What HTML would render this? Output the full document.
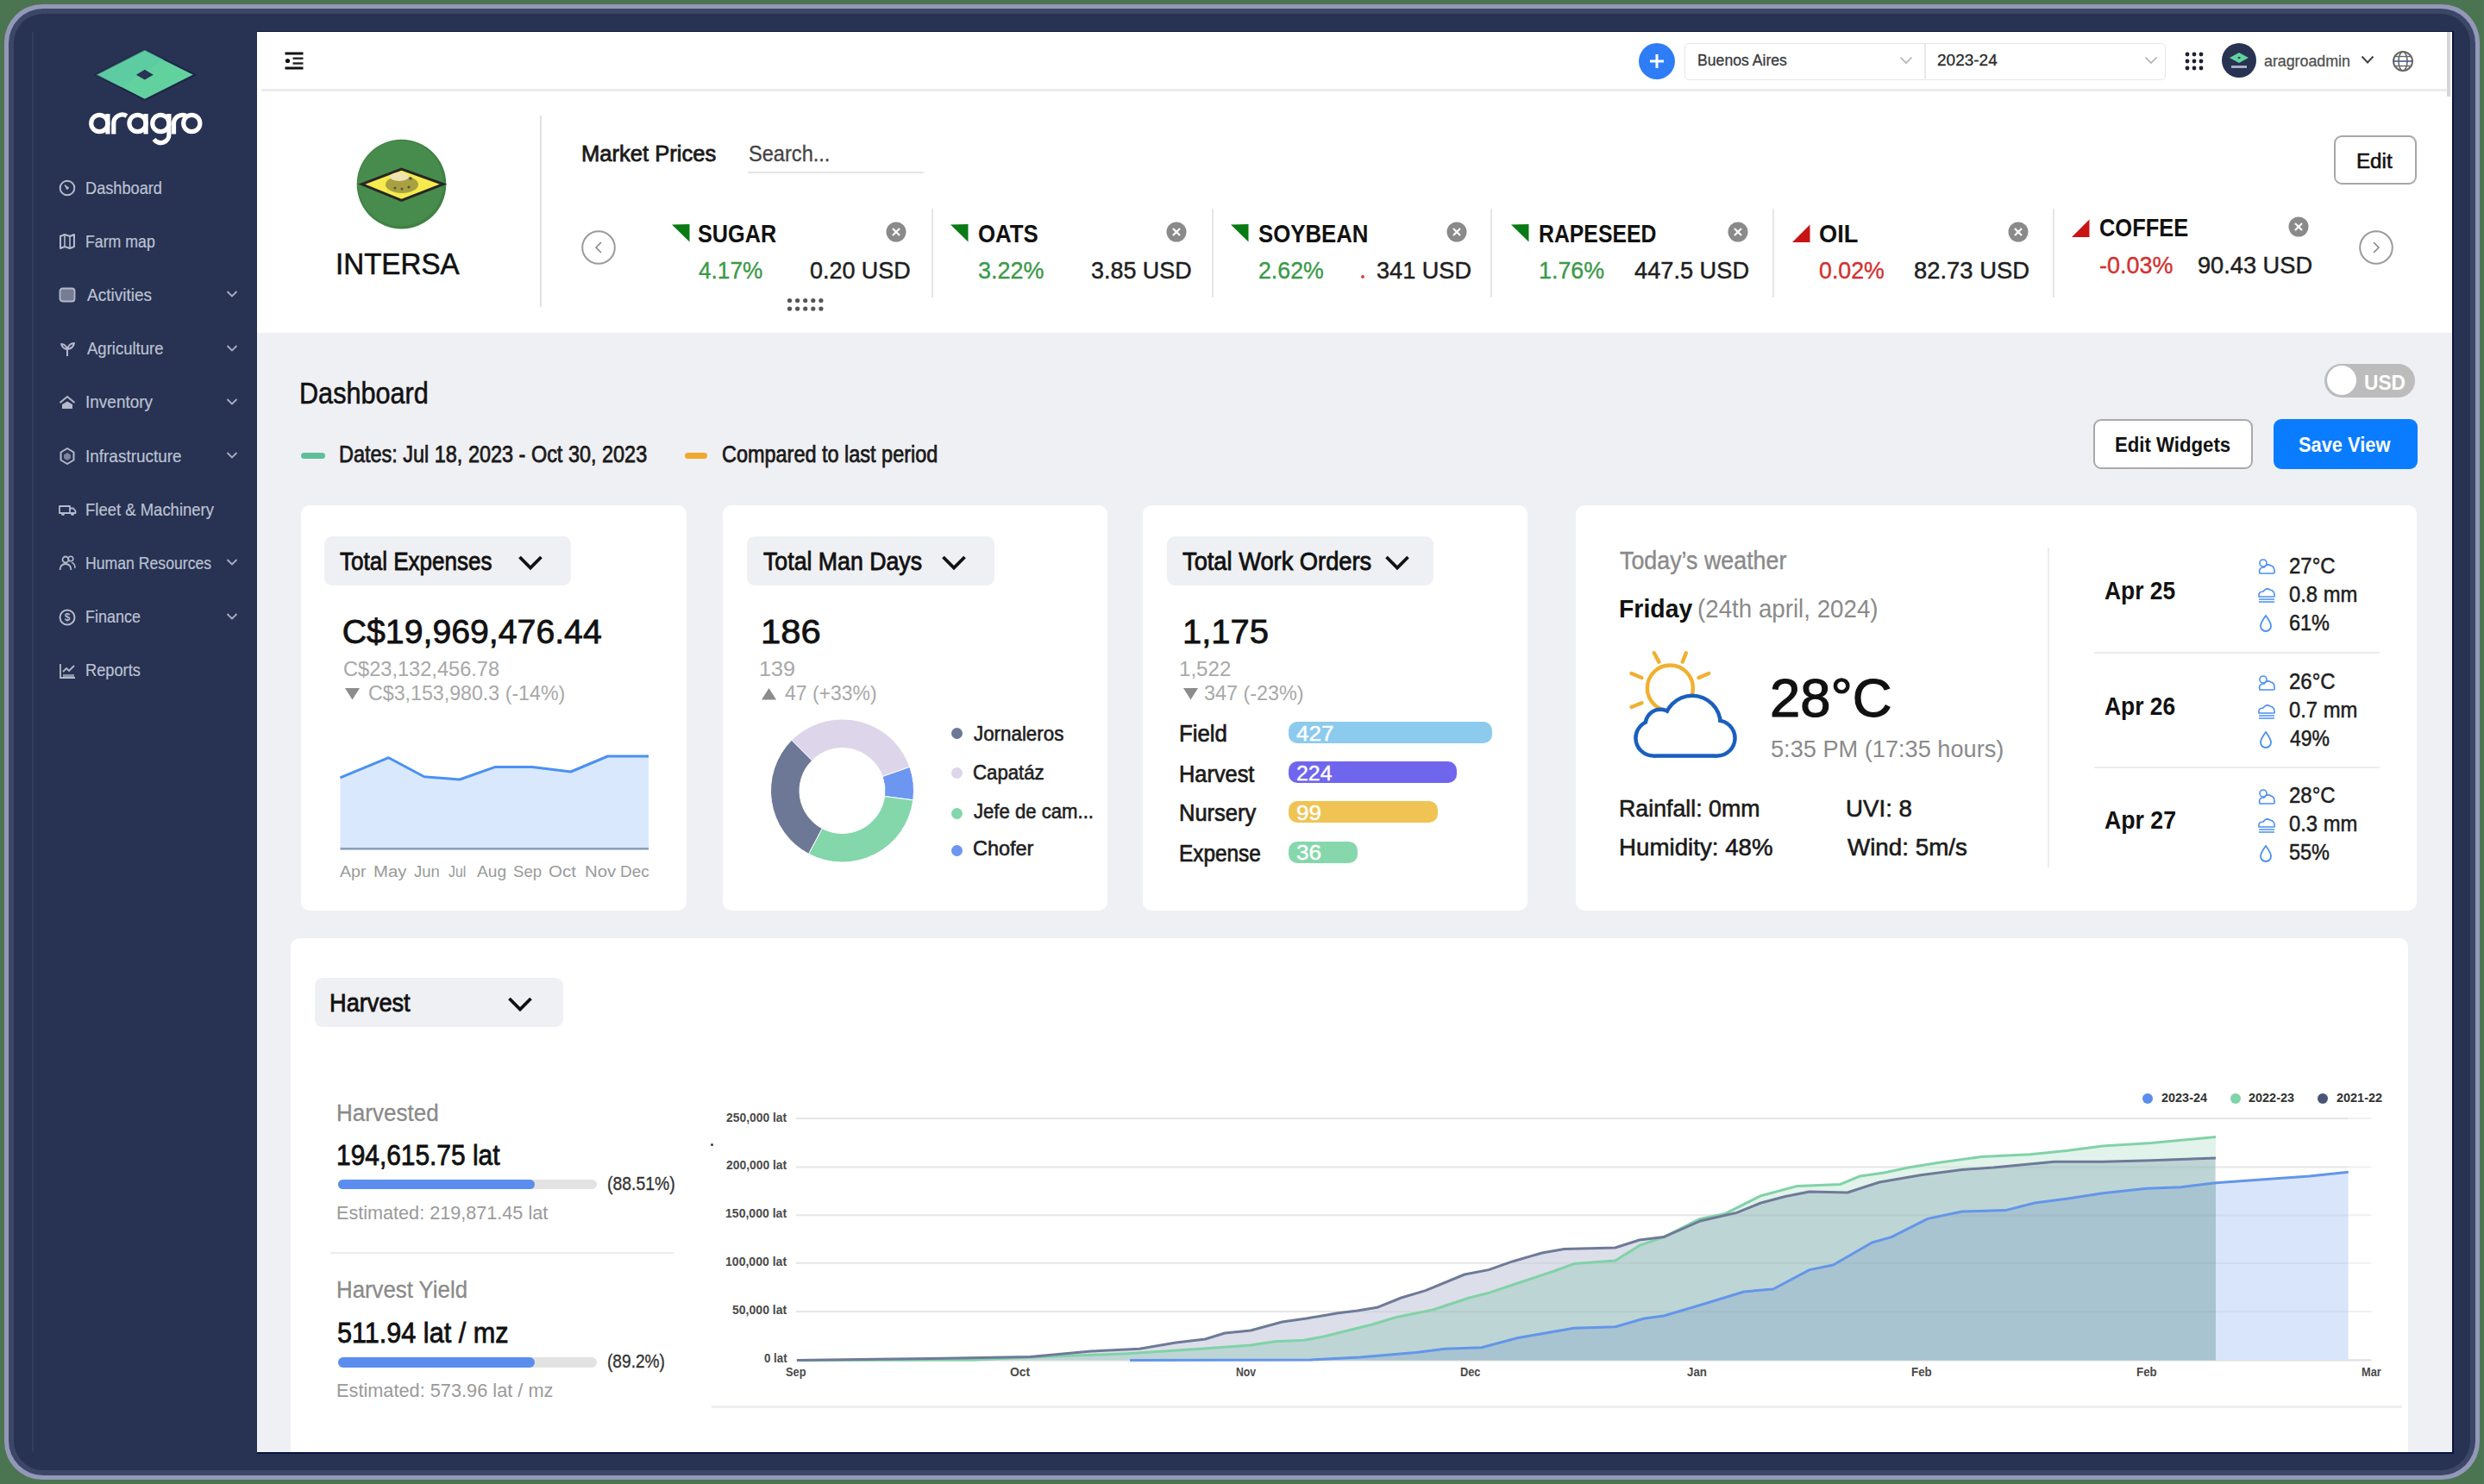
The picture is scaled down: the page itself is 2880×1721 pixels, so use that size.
<!DOCTYPE html>
<html><head><meta charset="utf-8"><style>
html,body{margin:0;padding:0;}
body{width:2880px;height:1721px;position:relative;overflow:hidden;background:#4a7550;font-family:"Liberation Sans", sans-serif;}
</style></head><body>
<div style="position:absolute;left:5.0px;top:5.0px;width:2870.0px;height:1711.0px;background:#9398b8;border-radius:44px;"></div>
<div style="position:absolute;left:10.0px;top:10.0px;width:2860.0px;height:1701.0px;background:#3c4667;border-radius:40px;"></div>
<div style="position:absolute;left:16.0px;top:16.0px;width:2848.0px;height:1689.0px;background:#283253;border-radius:34px;"></div>
<div style="position:absolute;left:37.0px;top:37.0px;width:2.0px;height:1647.0px;background:#323c5e;border-radius:0px;"></div>
<div style="position:absolute;left:37.0px;top:1682.5px;width:261.0px;height:1.5px;background:#2f395b;border-radius:0px;"></div>
<div style="position:absolute;left:39.0px;top:37.0px;width:259.0px;height:1647.0px;background:#283253;border-radius:0px;"></div>
<div style="position:absolute;left:298.0px;top:37.0px;width:2545.0px;height:349.0px;background:#ffffff;border-radius:0px;"></div>
<div style="position:absolute;left:298.0px;top:386.0px;width:2545.0px;height:1298.0px;background:#eff0f4;border-radius:0px;"></div>
<div style="position:absolute;left:303.0px;top:103.0px;width:2535.0px;height:3.0px;background:#ececef;border-radius:0px;"></div>
<div style="position:absolute;left:298.0px;top:35.5px;width:2547.0px;height:1.5px;background:#0a1440;border-radius:0px;"></div>
<div style="position:absolute;left:2843.0px;top:37.0px;width:1.5px;height:1647.0px;background:#0a1440;border-radius:0px;"></div>
<div style="position:absolute;left:298.0px;top:1684.0px;width:2547.0px;height:1.5px;background:#0a1440;border-radius:0px;"></div>
<div style="position:absolute;left:2837.0px;top:37.0px;width:4.0px;height:75.0px;background:#d6d6d6;border-radius:0px;"></div>
<svg style="position:absolute;left:0;top:0" width="300" height="200" viewBox="0 0 300 200">
<polygon points="111,86.7 167.8,57.5 226,86.7 167.8,115.8" fill="#61d29e" stroke="#1c2546" stroke-width="2"/>
<polygon points="111,86.7 167.8,57.5 190,69 140,101" fill="#5bc6a6" opacity="0.5"/>
<polygon points="157.8,86.7 167.8,80.8 177.8,86.7 167.8,92.6" fill="#283253"/>
<g fill="none" stroke="#ffffff" stroke-width="5.2" stroke-linecap="butt">
<circle cx="115.3" cy="143" r="9.6"/><line x1="124.9" y1="132" x2="124.9" y2="155.5"/>
<path d="M131.8 155.5 V143 A10 10 0 0 1 147 134.5"/>
<circle cx="159.5" cy="143" r="9.6"/><line x1="169.1" y1="132" x2="169.1" y2="155.5"/>
<circle cx="186.3" cy="143" r="9.6"/><path d="M195.9 132 V155 A9.6 9.6 0 0 1 178.5 161.5"/>
<path d="M201.5 155.5 V143 A10 10 0 0 1 216 134.5"/>
<circle cx="222.3" cy="143" r="9.6"/>
</g></svg>
<div style="position:absolute;left:98.9px;top:207.5px;font-size:20.64px;font-weight:normal;color:#bcc2d2;white-space:nowrap;line-height:1;transform:scaleX(0.8816);transform-origin:0 0;-webkit-text-stroke:0.2px #bcc2d2;">Dashboard</div>
<svg style="position:absolute;left:66.4px;top:206.0px" width="24" height="24"><circle cx="12" cy="12" r="8.3" fill="none" stroke="#b4bacb" stroke-width="2"/><path d="M12 12 L9 8.5" stroke="#b4bacb" stroke-width="1.8"/><circle cx="12" cy="12" r="1.8" fill="#b4bacb"/></svg>
<div style="position:absolute;left:99.0px;top:269.7px;font-size:20.64px;font-weight:normal;color:#bcc2d2;white-space:nowrap;line-height:1;transform:scaleX(0.8604);transform-origin:0 0;-webkit-text-stroke:0.2px #bcc2d2;">Farm map</div>
<svg style="position:absolute;left:66.4px;top:268.2px" width="24" height="24"><path d="M4 6 L9 4 L15 6 L20 4 V18 L15 20 L9 18 L4 20 Z" fill="none" stroke="#b4bacb" stroke-width="2" stroke-linejoin="round"/><path d="M9 4 V18 M15 6 V20" stroke="#b4bacb" stroke-width="1.6"/></svg>
<div style="position:absolute;left:100.7px;top:331.9px;font-size:20.64px;font-weight:normal;color:#bcc2d2;white-space:nowrap;line-height:1;transform:scaleX(0.9235);transform-origin:0 0;-webkit-text-stroke:0.2px #bcc2d2;">Activities</div>
<svg style="position:absolute;left:66.4px;top:330.4px" width="24" height="24"><rect x="3.5" y="4.5" width="17" height="15" rx="3" fill="#b4bacb" opacity="0.55"/><rect x="3.5" y="4.5" width="17" height="15" rx="3" fill="none" stroke="#b4bacb" stroke-width="1.8"/></svg>
<svg style="position:absolute;left:262px;top:336.4px" width="14" height="10"><path d="M1.5 2 L7 7.5 L12.5 2" fill="none" stroke="#aab0c4" stroke-width="1.8"/></svg>
<div style="position:absolute;left:100.7px;top:394.1px;font-size:20.64px;font-weight:normal;color:#bcc2d2;white-space:nowrap;line-height:1;transform:scaleX(0.8980);transform-origin:0 0;-webkit-text-stroke:0.2px #bcc2d2;">Agriculture</div>
<svg style="position:absolute;left:66.4px;top:392.6px" width="24" height="24"><path d="M12 20 V12 M12 12 Q7 12 5 6 Q10 6 12 12 M12 12 Q14 5 20 5 Q19 11 12 12" fill="none" stroke="#b4bacb" stroke-width="2" stroke-linejoin="round"/></svg>
<svg style="position:absolute;left:262px;top:398.6px" width="14" height="10"><path d="M1.5 2 L7 7.5 L12.5 2" fill="none" stroke="#aab0c4" stroke-width="1.8"/></svg>
<div style="position:absolute;left:98.9px;top:456.3px;font-size:20.64px;font-weight:normal;color:#bcc2d2;white-space:nowrap;line-height:1;transform:scaleX(0.9205);transform-origin:0 0;-webkit-text-stroke:0.2px #bcc2d2;">Inventory</div>
<svg style="position:absolute;left:66.4px;top:454.8px" width="24" height="24"><path d="M3.5 12 L12 5 L20.5 12" fill="none" stroke="#b4bacb" stroke-width="2"/><path d="M6 19 V14 L12 10.5 L18 14 V19 Z" fill="#b4bacb"/></svg>
<svg style="position:absolute;left:262px;top:460.8px" width="14" height="10"><path d="M1.5 2 L7 7.5 L12.5 2" fill="none" stroke="#aab0c4" stroke-width="1.8"/></svg>
<div style="position:absolute;left:98.9px;top:518.5px;font-size:20.64px;font-weight:normal;color:#bcc2d2;white-space:nowrap;line-height:1;transform:scaleX(0.9185);transform-origin:0 0;-webkit-text-stroke:0.2px #bcc2d2;">Infrastructure</div>
<svg style="position:absolute;left:66.4px;top:517.0px" width="24" height="24"><path d="M12 3 L19.5 7.5 V16.5 L12 21 L4.5 16.5 V7.5 Z" fill="none" stroke="#b4bacb" stroke-width="2" stroke-linejoin="round"/><path d="M12 8 L16 10.5 V14.5 L12 17 L8 14.5 V10.5 Z" fill="#b4bacb" opacity="0.6"/></svg>
<svg style="position:absolute;left:262px;top:523.0px" width="14" height="10"><path d="M1.5 2 L7 7.5 L12.5 2" fill="none" stroke="#aab0c4" stroke-width="1.8"/></svg>
<div style="position:absolute;left:98.9px;top:580.7px;font-size:20.64px;font-weight:normal;color:#bcc2d2;white-space:nowrap;line-height:1;transform:scaleX(0.8963);transform-origin:0 0;-webkit-text-stroke:0.2px #bcc2d2;">Fleet &amp; Machinery</div>
<svg style="position:absolute;left:66.4px;top:579.2px" width="24" height="24"><path d="M3 8 H15 V16 H3 Z M15 10.5 H19 L21.5 13.5 V16 H15" fill="none" stroke="#b4bacb" stroke-width="1.8" stroke-linejoin="round"/><circle cx="7" cy="17" r="2" fill="#b4bacb"/><circle cx="18" cy="17" r="2" fill="#b4bacb"/></svg>
<div style="position:absolute;left:99.0px;top:642.9px;font-size:20.64px;font-weight:normal;color:#bcc2d2;white-space:nowrap;line-height:1;transform:scaleX(0.8554);transform-origin:0 0;-webkit-text-stroke:0.2px #bcc2d2;">Human Resources</div>
<svg style="position:absolute;left:66.4px;top:641.4px" width="24" height="24"><circle cx="10" cy="8" r="3.5" fill="none" stroke="#b4bacb" stroke-width="1.8"/><path d="M3.5 20 Q4 13 10 13 Q16 13 16.5 20" fill="none" stroke="#b4bacb" stroke-width="1.8"/><circle cx="16" cy="7" r="2.8" fill="none" stroke="#b4bacb" stroke-width="1.5"/><path d="M17 11.5 Q21 12 21 18" fill="none" stroke="#b4bacb" stroke-width="1.5"/></svg>
<svg style="position:absolute;left:262px;top:647.4px" width="14" height="10"><path d="M1.5 2 L7 7.5 L12.5 2" fill="none" stroke="#aab0c4" stroke-width="1.8"/></svg>
<div style="position:absolute;left:99.0px;top:705.1px;font-size:20.64px;font-weight:normal;color:#bcc2d2;white-space:nowrap;line-height:1;transform:scaleX(0.8718);transform-origin:0 0;-webkit-text-stroke:0.2px #bcc2d2;">Finance</div>
<svg style="position:absolute;left:66.4px;top:703.6px" width="24" height="24"><circle cx="12" cy="12" r="8.5" fill="none" stroke="#b4bacb" stroke-width="2"/><text x="12" y="16.3" font-size="12" font-family="Liberation Sans" font-weight="bold" text-anchor="middle" fill="#b4bacb">$</text></svg>
<svg style="position:absolute;left:262px;top:709.6px" width="14" height="10"><path d="M1.5 2 L7 7.5 L12.5 2" fill="none" stroke="#aab0c4" stroke-width="1.8"/></svg>
<div style="position:absolute;left:98.9px;top:767.3px;font-size:20.64px;font-weight:normal;color:#bcc2d2;white-space:nowrap;line-height:1;transform:scaleX(0.8843);transform-origin:0 0;-webkit-text-stroke:0.2px #bcc2d2;">Reports</div>
<svg style="position:absolute;left:66.4px;top:765.8px" width="24" height="24"><path d="M4 4 V20 H21" fill="none" stroke="#b4bacb" stroke-width="1.8"/><path d="M7 13 L11 9 L14 12 L20 6" fill="none" stroke="#b4bacb" stroke-width="1.8"/><rect x="7" y="16" width="13" height="3" fill="#b4bacb" opacity="0.7"/></svg>
<svg style="position:absolute;left:325px;top:55px" width="32" height="30">
<rect x="5.5" y="5.5" width="21" height="3" fill="#111"/>
<rect x="14.5" y="11.5" width="12" height="2.4" fill="#222"/>
<rect x="14.5" y="17.3" width="12" height="2.4" fill="#222"/>
<circle cx="8.5" cy="15.5" r="2.6" fill="#111"/>
<rect x="5.5" y="22.5" width="21" height="3" fill="#111"/>
</svg>
<div style="position:absolute;left:1900px;top:49.6px;width:42px;height:42px;border-radius:50%;background:#2f7df6"></div>
<svg style="position:absolute;left:1900px;top:49.6px" width="42" height="42"><path d="M21 13 V29 M13 21 H29" stroke="#fff" stroke-width="3"/></svg>
<div style="position:absolute;left:1953px;top:49.5px;width:556px;height:41px;border:1.5px solid #e6e6e6;border-radius:5px;background:#fff"></div>
<div style="position:absolute;left:2231.0px;top:51.0px;width:2.0px;height:40.0px;background:#e8e8e8;border-radius:0px;"></div>
<div style="position:absolute;left:1967.7px;top:61.2px;font-size:18.90px;font-weight:normal;color:#3a3a3a;white-space:nowrap;line-height:1;transform:scaleX(0.9336);transform-origin:0 0;-webkit-text-stroke:0.3px #3a3a3a;">Buenos Aires</div>
<div style="position:absolute;left:2246.4px;top:61.2px;font-size:18.90px;font-weight:normal;color:#2a2a2a;white-space:nowrap;line-height:1;transform:scaleX(1.0059);transform-origin:0 0;-webkit-text-stroke:0.3px #2a2a2a;">2023-24</div>
<svg style="position:absolute;left:2202px;top:64px" width="16" height="12"><path d="M1.5 2.5 L8 9 L14.5 2.5" fill="none" stroke="#b0b0b0" stroke-width="1.6"/></svg>
<svg style="position:absolute;left:2486px;top:64px" width="16" height="12"><path d="M1.5 2.5 L8 9 L14.5 2.5" fill="none" stroke="#b0b0b0" stroke-width="1.6"/></svg>
<svg style="position:absolute;left:2533px;top:60px" width="24" height="24"><circle cx="3" cy="3" r="2.4" fill="#1d2033"/><circle cx="3" cy="11" r="2.4" fill="#1d2033"/><circle cx="3" cy="19" r="2.4" fill="#1d2033"/><circle cx="11" cy="3" r="2.4" fill="#1d2033"/><circle cx="11" cy="11" r="2.4" fill="#1d2033"/><circle cx="11" cy="19" r="2.4" fill="#1d2033"/><circle cx="19" cy="3" r="2.4" fill="#1d2033"/><circle cx="19" cy="11" r="2.4" fill="#1d2033"/><circle cx="19" cy="19" r="2.4" fill="#1d2033"/></svg>
<svg style="position:absolute;left:2576px;top:50px" width="40" height="40">
<circle cx="20" cy="20" r="20" fill="#283253"/>
<polygon points="9,17 20,11 31,17 20,23" fill="#61d29e"/>
<polygon points="18,17 20,15.8 22,17 20,18.2" fill="#283253"/>
<rect x="11" y="26" width="18" height="3" fill="#c9cde0" opacity="0.8"/>
</svg>
<div style="position:absolute;left:2625.0px;top:62.1px;font-size:18.17px;font-weight:normal;color:#505050;white-space:nowrap;line-height:1;transform:scaleX(0.9800);transform-origin:0 0;-webkit-text-stroke:0.3px #505050;">aragroadmin</div>
<svg style="position:absolute;left:2737px;top:63px" width="16" height="12"><path d="M1.5 2.5 L8 9.5 L14.5 2.5" fill="none" stroke="#444" stroke-width="2"/></svg>
<svg style="position:absolute;left:2772px;top:57px" width="28" height="28">
<circle cx="14" cy="14" r="11" fill="none" stroke="#666" stroke-width="2"/>
<ellipse cx="14" cy="14" rx="5" ry="11" fill="none" stroke="#666" stroke-width="1.6"/>
<line x1="3" y1="14" x2="25" y2="14" stroke="#4a5a90" stroke-width="1.6"/>
<line x1="5" y1="8.5" x2="23" y2="8.5" stroke="#666" stroke-width="1.4"/>
<line x1="5" y1="19.5" x2="23" y2="19.5" stroke="#666" stroke-width="1.4"/>
</svg>
<svg style="position:absolute;left:410px;top:160px" width="110" height="110" viewBox="0 0 110 110">
<circle cx="55.5" cy="53.6" r="51.8" fill="#3f8244"/>
<circle cx="54.5" cy="52.6" r="49.5" fill="#488c4d"/>
<polygon points="9.4,53.6 55.5,36 104,53.6 55.5,72.4" fill="#f6ea4e" stroke="#262626" stroke-width="3"/>
<ellipse cx="56" cy="54" rx="19" ry="10" fill="#a9a040"/>
<ellipse cx="53" cy="45" rx="11" ry="5" fill="#efe2b4"/>
<circle cx="48" cy="58" r="1.6" fill="#555"/><circle cx="56" cy="59" r="1.6" fill="#555"/><circle cx="64" cy="57" r="1.6" fill="#555"/><circle cx="66" cy="47" r="1.8" fill="#555"/>
</svg>
<div style="position:absolute;left:388.8px;top:289.3px;font-size:35.61px;font-weight:normal;color:#111;white-space:nowrap;line-height:1;transform:scaleX(0.9303);transform-origin:0 0;-webkit-text-stroke:0.6px #111;">INTERSA</div>
<div style="position:absolute;left:626.0px;top:134.0px;width:2.0px;height:222.0px;background:#e2e2e2;border-radius:0px;"></div>
<div style="position:absolute;left:673.5px;top:164.8px;font-size:26.16px;font-weight:normal;color:#1a1a1a;white-space:nowrap;line-height:1;transform:scaleX(0.9777);transform-origin:0 0;-webkit-text-stroke:0.8px #1a1a1a;">Market Prices</div>
<div style="position:absolute;left:868.1px;top:164.8px;font-size:26.16px;font-weight:normal;color:#444;white-space:nowrap;line-height:1;transform:scaleX(0.9020);transform-origin:0 0;-webkit-text-stroke:0.3px #444;">Search...</div>
<div style="position:absolute;left:867.0px;top:199.0px;width:204.0px;height:2.0px;background:#e4e4e4;border-radius:0px;"></div>
<svg style="position:absolute;left:674.0px;top:266.5px" width="40" height="40"><circle cx="20" cy="20" r="18.8" fill="none" stroke="#9a9a9a" stroke-width="2"/><path d="M23 14 L17 20 L23 26" fill="none" stroke="#888" stroke-width="1.6"/></svg>
<svg style="position:absolute;left:2734.6px;top:266.5px" width="40" height="40"><circle cx="20" cy="20" r="18.8" fill="none" stroke="#9a9a9a" stroke-width="2"/><path d="M17 14 L23 20 L17 26" fill="none" stroke="#888" stroke-width="1.6"/></svg>
<div style="position:absolute;left:1080.0px;top:242.0px;width:2.0px;height:103.0px;background:#e6e6e6;border-radius:0px;"></div>
<div style="position:absolute;left:1405.0px;top:242.0px;width:2.0px;height:103.0px;background:#e6e6e6;border-radius:0px;"></div>
<div style="position:absolute;left:1728.0px;top:242.0px;width:2.0px;height:103.0px;background:#e6e6e6;border-radius:0px;"></div>
<div style="position:absolute;left:2055.0px;top:242.0px;width:2.0px;height:103.0px;background:#e6e6e6;border-radius:0px;"></div>
<div style="position:absolute;left:2380.0px;top:242.0px;width:2.0px;height:103.0px;background:#e6e6e6;border-radius:0px;"></div>
<svg style="position:absolute;left:777.6px;top:259.0px" width="24" height="24"><polygon points="1,1.5 21.5,1 21.5,21.5" fill="#0a7a14"/></svg>
<div style="position:absolute;left:808.7px;top:256.9px;font-size:29.07px;font-weight:bold;color:#111;white-space:nowrap;line-height:1;transform:scaleX(0.8680);transform-origin:0 0;">SUGAR</div>
<div style="position:absolute;left:809.6px;top:300.2px;font-size:27.62px;font-weight:normal;color:#3a9a48;white-space:nowrap;line-height:1;transform:scaleX(0.9487);transform-origin:0 0;-webkit-text-stroke:0.35px #3a9a48;">4.17%</div>
<div style="position:absolute;left:939.0px;top:300.2px;font-size:27.62px;font-weight:normal;color:#1e1e1e;white-space:nowrap;line-height:1;transform:scaleX(0.9746);transform-origin:0 0;-webkit-text-stroke:0.45px #1e1e1e;">0.20 USD</div>
<svg style="position:absolute;left:1026.5px;top:257.4px" width="24" height="24"><circle cx="12" cy="12" r="11.5" fill="#8a8a8a"/><path d="M8 8 L16 16 M16 8 L8 16" stroke="#fff" stroke-width="2.2"/></svg>
<svg style="position:absolute;left:1101.0px;top:259.0px" width="24" height="24"><polygon points="1,1.5 21.5,1 21.5,21.5" fill="#0a7a14"/></svg>
<div style="position:absolute;left:1134.1px;top:256.9px;font-size:29.07px;font-weight:bold;color:#111;white-space:nowrap;line-height:1;transform:scaleX(0.8883);transform-origin:0 0;">OATS</div>
<div style="position:absolute;left:1134.0px;top:300.2px;font-size:27.62px;font-weight:normal;color:#3a9a48;white-space:nowrap;line-height:1;transform:scaleX(0.9779);transform-origin:0 0;-webkit-text-stroke:0.35px #3a9a48;">3.22%</div>
<div style="position:absolute;left:1265.0px;top:300.2px;font-size:27.62px;font-weight:normal;color:#1e1e1e;white-space:nowrap;line-height:1;transform:scaleX(0.9746);transform-origin:0 0;-webkit-text-stroke:0.45px #1e1e1e;">3.85 USD</div>
<svg style="position:absolute;left:1352.0px;top:257.4px" width="24" height="24"><circle cx="12" cy="12" r="11.5" fill="#8a8a8a"/><path d="M8 8 L16 16 M16 8 L8 16" stroke="#fff" stroke-width="2.2"/></svg>
<svg style="position:absolute;left:1426.0px;top:259.0px" width="24" height="24"><polygon points="1,1.5 21.5,1 21.5,21.5" fill="#0a7a14"/></svg>
<div style="position:absolute;left:1459.1px;top:256.9px;font-size:29.07px;font-weight:bold;color:#111;white-space:nowrap;line-height:1;transform:scaleX(0.8865);transform-origin:0 0;">SOYBEAN</div>
<div style="position:absolute;left:1459.0px;top:300.2px;font-size:27.62px;font-weight:normal;color:#3a9a48;white-space:nowrap;line-height:1;transform:scaleX(0.9675);transform-origin:0 0;-webkit-text-stroke:0.35px #3a9a48;">2.62%</div>
<div style="position:absolute;left:1596.0px;top:300.2px;font-size:27.62px;font-weight:normal;color:#1e1e1e;white-space:nowrap;line-height:1;transform:scaleX(0.9818);transform-origin:0 0;-webkit-text-stroke:0.45px #1e1e1e;">341 USD</div>
<svg style="position:absolute;left:1677.0px;top:257.4px" width="24" height="24"><circle cx="12" cy="12" r="11.5" fill="#8a8a8a"/><path d="M8 8 L16 16 M16 8 L8 16" stroke="#fff" stroke-width="2.2"/></svg>
<svg style="position:absolute;left:1751.0px;top:259.0px" width="24" height="24"><polygon points="1,1.5 21.5,1 21.5,21.5" fill="#0a7a14"/></svg>
<div style="position:absolute;left:1784.3px;top:256.9px;font-size:29.07px;font-weight:bold;color:#111;white-space:nowrap;line-height:1;transform:scaleX(0.8535);transform-origin:0 0;">RAPESEED</div>
<div style="position:absolute;left:1784.1px;top:300.2px;font-size:27.62px;font-weight:normal;color:#3a9a48;white-space:nowrap;line-height:1;transform:scaleX(0.9737);transform-origin:0 0;-webkit-text-stroke:0.35px #3a9a48;">1.76%</div>
<div style="position:absolute;left:1895.0px;top:300.2px;font-size:27.62px;font-weight:normal;color:#1e1e1e;white-space:nowrap;line-height:1;transform:scaleX(0.9851);transform-origin:0 0;-webkit-text-stroke:0.45px #1e1e1e;">447.5 USD</div>
<svg style="position:absolute;left:2003.0px;top:257.4px" width="24" height="24"><circle cx="12" cy="12" r="11.5" fill="#8a8a8a"/><path d="M8 8 L16 16 M16 8 L8 16" stroke="#fff" stroke-width="2.2"/></svg>
<svg style="position:absolute;left:2076.5px;top:259.0px" width="24" height="24"><polygon points="1,22 21.5,22 21.5,1.5" fill="#c81414"/></svg>
<div style="position:absolute;left:2109.1px;top:256.9px;font-size:29.07px;font-weight:bold;color:#111;white-space:nowrap;line-height:1;transform:scaleX(0.9362);transform-origin:0 0;">OIL</div>
<div style="position:absolute;left:2109.0px;top:300.2px;font-size:27.62px;font-weight:normal;color:#d2302f;white-space:nowrap;line-height:1;transform:scaleX(0.9688);transform-origin:0 0;-webkit-text-stroke:0.35px #d2302f;">0.02%</div>
<div style="position:absolute;left:2219.0px;top:300.2px;font-size:27.62px;font-weight:normal;color:#1e1e1e;white-space:nowrap;line-height:1;transform:scaleX(0.9925);transform-origin:0 0;-webkit-text-stroke:0.45px #1e1e1e;">82.73 USD</div>
<svg style="position:absolute;left:2328.0px;top:257.4px" width="24" height="24"><circle cx="12" cy="12" r="11.5" fill="#8a8a8a"/><path d="M8 8 L16 16 M16 8 L8 16" stroke="#fff" stroke-width="2.2"/></svg>
<svg style="position:absolute;left:2401.0px;top:252.5px" width="24" height="24"><polygon points="1,22 21.5,22 21.5,1.5" fill="#c81414"/></svg>
<div style="position:absolute;left:2434.1px;top:250.4px;font-size:29.07px;font-weight:bold;color:#111;white-space:nowrap;line-height:1;transform:scaleX(0.8750);transform-origin:0 0;">COFFEE</div>
<div style="position:absolute;left:2434.0px;top:293.7px;font-size:27.62px;font-weight:normal;color:#d2302f;white-space:nowrap;line-height:1;transform:scaleX(0.9767);transform-origin:0 0;-webkit-text-stroke:0.35px #d2302f;">-0.03%</div>
<div style="position:absolute;left:2548.0px;top:293.7px;font-size:27.62px;font-weight:normal;color:#1e1e1e;white-space:nowrap;line-height:1;transform:scaleX(0.9850);transform-origin:0 0;-webkit-text-stroke:0.45px #1e1e1e;">90.43 USD</div>
<svg style="position:absolute;left:2653.0px;top:250.9px" width="24" height="24"><circle cx="12" cy="12" r="11.5" fill="#8a8a8a"/><path d="M8 8 L16 16 M16 8 L8 16" stroke="#fff" stroke-width="2.2"/></svg>
<div style="position:absolute;left:1578px;top:319px;width:4px;height:4px;border-radius:50%;background:#e04040"></div>
<svg style="position:absolute;left:910px;top:344px" width="48" height="20"><circle cx="5.5" cy="4.5" r="2.6" fill="#555"/><circle cx="5.5" cy="14.0" r="2.6" fill="#555"/><circle cx="14.6" cy="4.5" r="2.6" fill="#555"/><circle cx="14.6" cy="14.0" r="2.6" fill="#555"/><circle cx="23.7" cy="4.5" r="2.6" fill="#555"/><circle cx="23.7" cy="14.0" r="2.6" fill="#555"/><circle cx="32.8" cy="4.5" r="2.6" fill="#555"/><circle cx="32.8" cy="14.0" r="2.6" fill="#555"/><circle cx="41.9" cy="4.5" r="2.6" fill="#555"/><circle cx="41.9" cy="14.0" r="2.6" fill="#555"/></svg>
<div style="position:absolute;left:2706px;top:157px;width:92px;height:53px;border:2px solid #a8a8a8;border-radius:9px;background:#fff"></div>
<div style="position:absolute;left:2731.6px;top:174.8px;font-size:24.42px;font-weight:normal;color:#111;white-space:nowrap;line-height:1;transform:scaleX(0.9900);transform-origin:0 0;-webkit-text-stroke:0.6px #111;">Edit</div>
<div style="position:absolute;left:347.3px;top:438.8px;font-size:35.61px;font-weight:normal;color:#111;white-space:nowrap;line-height:1;transform:scaleX(0.8596);transform-origin:0 0;-webkit-text-stroke:0.6px #111;">Dashboard</div>
<div style="position:absolute;left:349.0px;top:525.0px;width:28.0px;height:7.0px;background:#5fbf9a;border-radius:4px;"></div>
<div style="position:absolute;left:392.9px;top:513.7px;font-size:27.03px;font-weight:normal;color:#1a1a1a;white-space:nowrap;line-height:1;transform:scaleX(0.8680);transform-origin:0 0;-webkit-text-stroke:0.75px #1a1a1a;">Dates: Jul 18, 2023 - Oct 30, 2023</div>
<div style="position:absolute;left:793.6px;top:525.0px;width:26.4px;height:7.0px;background:#f0a830;border-radius:4px;"></div>
<div style="position:absolute;left:836.8px;top:513.7px;font-size:27.03px;font-weight:normal;color:#1a1a1a;white-space:nowrap;line-height:1;transform:scaleX(0.8682);transform-origin:0 0;-webkit-text-stroke:0.75px #1a1a1a;">Compared to last period</div>
<div style="position:absolute;left:2695.0px;top:421.7px;width:105.0px;height:39.0px;background:#bcbcbc;border-radius:20px;"></div>
<div style="position:absolute;left:2698px;top:424px;width:34px;height:34px;border-radius:50%;background:#fff"></div>
<div style="position:absolute;left:2741.1px;top:431.6px;font-size:24.71px;font-weight:bold;color:#ffffff;white-space:nowrap;line-height:1;transform:scaleX(0.9200);transform-origin:0 0;">USD</div>
<div style="position:absolute;left:2427px;top:485.5px;width:181px;height:54px;border:2px solid #a9a9a9;border-radius:9px;background:#fff"></div>
<div style="position:absolute;left:2452.2px;top:504.1px;font-size:24.71px;font-weight:bold;color:#111;white-space:nowrap;line-height:1;transform:scaleX(0.8980);transform-origin:0 0;">Edit Widgets</div>
<div style="position:absolute;left:2635.5px;top:485.5px;width:167.5px;height:58.5px;background:#0a7cff;border-radius:9px;"></div>
<div style="position:absolute;left:2665.1px;top:504.1px;font-size:24.71px;font-weight:bold;color:#ffffff;white-space:nowrap;line-height:1;transform:scaleX(0.8833);transform-origin:0 0;">Save View</div>
<div style="position:absolute;left:349.0px;top:586.0px;width:446.5px;height:470.0px;background:#ffffff;border-radius:10px;"></div>
<div style="position:absolute;left:838.0px;top:586.0px;width:445.7px;height:470.0px;background:#ffffff;border-radius:10px;"></div>
<div style="position:absolute;left:1324.8px;top:586.0px;width:445.8px;height:470.0px;background:#ffffff;border-radius:10px;"></div>
<div style="position:absolute;left:1827.0px;top:586.0px;width:975.4px;height:470.0px;background:#ffffff;border-radius:10px;"></div>
<div style="position:absolute;left:337.0px;top:1087.6px;width:2454.7px;height:596.4px;background:#ffffff;border-radius:0px;border-radius:10px 10px 0 0"></div>
<div style="position:absolute;left:375.6px;top:622.0px;width:286.4px;height:57.0px;background:#eff0f4;border-radius:9px;"></div>
<div style="position:absolute;left:394.1px;top:636.7px;font-size:29.07px;font-weight:normal;color:#111;white-space:nowrap;line-height:1;transform:scaleX(0.8959);transform-origin:0 0;-webkit-text-stroke:0.8px #111;">Total Expenses</div>
<svg style="position:absolute;left:600.0px;top:643.0px" width="30" height="20"><path d="M2.5 3 L15 15.5 L27.5 3" fill="none" stroke="#111" stroke-width="3.8"/></svg>
<div style="position:absolute;left:866.0px;top:622.0px;width:286.7px;height:57.0px;background:#eff0f4;border-radius:9px;"></div>
<div style="position:absolute;left:884.5px;top:636.7px;font-size:29.07px;font-weight:normal;color:#111;white-space:nowrap;line-height:1;transform:scaleX(0.9190);transform-origin:0 0;-webkit-text-stroke:0.8px #111;">Total Man Days</div>
<svg style="position:absolute;left:1091.0px;top:643.0px" width="30" height="20"><path d="M2.5 3 L15 15.5 L27.5 3" fill="none" stroke="#111" stroke-width="3.8"/></svg>
<div style="position:absolute;left:1352.8px;top:622.0px;width:308.8px;height:57.0px;background:#eff0f4;border-radius:9px;"></div>
<div style="position:absolute;left:1371.3px;top:636.7px;font-size:29.07px;font-weight:normal;color:#111;white-space:nowrap;line-height:1;transform:scaleX(0.9382);transform-origin:0 0;-webkit-text-stroke:0.8px #111;">Total Work Orders</div>
<svg style="position:absolute;left:1604.5px;top:643.0px" width="30" height="20"><path d="M2.5 3 L15 15.5 L27.5 3" fill="none" stroke="#111" stroke-width="3.8"/></svg>
<div style="position:absolute;left:365.0px;top:1134.3px;width:287.6px;height:57.0px;background:#eff0f4;border-radius:9px;"></div>
<div style="position:absolute;left:381.6px;top:1149.0px;font-size:29.07px;font-weight:normal;color:#111;white-space:nowrap;line-height:1;transform:scaleX(0.9354);transform-origin:0 0;-webkit-text-stroke:0.8px #111;">Harvest</div>
<svg style="position:absolute;left:588.0px;top:1155.3px" width="30" height="20"><path d="M2.5 3 L15 15.5 L27.5 3" fill="none" stroke="#111" stroke-width="3.8"/></svg>
<div style="position:absolute;left:396.7px;top:712.5px;font-size:39.24px;font-weight:normal;color:#111;white-space:nowrap;line-height:1;-webkit-text-stroke:0.8px #111;">C$19,969,476.44</div>
<div style="position:absolute;left:397.7px;top:764.2px;font-size:24.13px;font-weight:normal;color:#a8a8a8;white-space:nowrap;line-height:1;transform:scaleX(0.9781);transform-origin:0 0;">C$23,132,456.78</div>
<svg style="position:absolute;left:399px;top:797px" width="20" height="16"><polygon points="1,1 18,1 9.5,14.5" fill="#8c8c8c"/></svg>
<div style="position:absolute;left:426.5px;top:792.3px;font-size:24.13px;font-weight:normal;color:#a8a8a8;white-space:nowrap;line-height:1;transform:scaleX(0.9617);transform-origin:0 0;">C$3,153,980.3 (-14%)</div>
<div style="position:absolute;left:882.3px;top:712.5px;font-size:39.24px;font-weight:normal;color:#111;white-space:nowrap;line-height:1;transform:scaleX(1.0645);transform-origin:0 0;-webkit-text-stroke:0.8px #111;">186</div>
<div style="position:absolute;left:879.9px;top:764.2px;font-size:24.13px;font-weight:normal;color:#a8a8a8;white-space:nowrap;line-height:1;transform:scaleX(1.0432);transform-origin:0 0;">139</div>
<svg style="position:absolute;left:882px;top:797px" width="20" height="16"><polygon points="1,14.5 18,14.5 9.5,1" fill="#8c8c8c"/></svg>
<div style="position:absolute;left:909.8px;top:792.3px;font-size:24.13px;font-weight:normal;color:#a8a8a8;white-space:nowrap;line-height:1;transform:scaleX(0.9514);transform-origin:0 0;">47 (+33%)</div>
<div style="position:absolute;left:1371.0px;top:712.5px;font-size:39.24px;font-weight:normal;color:#111;white-space:nowrap;line-height:1;transform:scaleX(1.0189);transform-origin:0 0;-webkit-text-stroke:0.8px #111;">1,175</div>
<div style="position:absolute;left:1367.0px;top:764.2px;font-size:24.13px;font-weight:normal;color:#a8a8a8;white-space:nowrap;line-height:1;">1,522</div>
<svg style="position:absolute;left:1371px;top:797px" width="20" height="16"><polygon points="1,1 18,1 9.5,14.5" fill="#8c8c8c"/></svg>
<div style="position:absolute;left:1396.4px;top:792.3px;font-size:24.13px;font-weight:normal;color:#a8a8a8;white-space:nowrap;line-height:1;transform:scaleX(0.9684);transform-origin:0 0;">347 (-23%)</div>
<svg style="position:absolute;left:380px;top:860px" width="390" height="140">
<polygon points="14.5,124.3 14.5,41.8 70.6,18.7 111.8,40.8 153.0,44.0 193.7,29.6 237.0,29.6 281.8,35.0 324.7,17.0 372.0,17.0 372.0,124.3" fill="#d9e8fc"/>
<polyline points="14.5,41.8 70.6,18.7 111.8,40.8 153.0,44.0 193.7,29.6 237.0,29.6 281.8,35.0 324.7,17.0 372.0,17.0" fill="none" stroke="#4b90f2" stroke-width="3" stroke-linejoin="round"/>
<rect x="14.5" y="123" width="357.5" height="2.6" fill="#8aa0bb"/>
</svg>
<div style="position:absolute;left:393.5px;top:1001.1px;font-size:19.19px;font-weight:normal;color:#9a9a9a;white-space:nowrap;line-height:1;transform:scaleX(1.0233);transform-origin:0 0;">Apr</div>
<div style="position:absolute;left:432.9px;top:1001.1px;font-size:19.19px;font-weight:normal;color:#9a9a9a;white-space:nowrap;line-height:1;transform:scaleX(1.0571);transform-origin:0 0;">May</div>
<div style="position:absolute;left:480.4px;top:1001.1px;font-size:19.19px;font-weight:normal;color:#9a9a9a;white-space:nowrap;line-height:1;transform:scaleX(0.9667);transform-origin:0 0;">Jun</div>
<div style="position:absolute;left:520.0px;top:1001.1px;font-size:19.19px;font-weight:normal;color:#9a9a9a;white-space:nowrap;line-height:1;transform:scaleX(0.8261);transform-origin:0 0;">Jul</div>
<div style="position:absolute;left:553.0px;top:1001.1px;font-size:19.19px;font-weight:normal;color:#9a9a9a;white-space:nowrap;line-height:1;">Aug</div>
<div style="position:absolute;left:595.0px;top:1001.1px;font-size:19.19px;font-weight:normal;color:#9a9a9a;white-space:nowrap;line-height:1;transform:scaleX(0.9697);transform-origin:0 0;">Sep</div>
<div style="position:absolute;left:636.3px;top:1001.1px;font-size:19.19px;font-weight:normal;color:#9a9a9a;white-space:nowrap;line-height:1;transform:scaleX(1.0690);transform-origin:0 0;">Oct</div>
<div style="position:absolute;left:678.2px;top:1001.1px;font-size:19.19px;font-weight:normal;color:#9a9a9a;white-space:nowrap;line-height:1;transform:scaleX(1.0606);transform-origin:0 0;">Nov</div>
<div style="position:absolute;left:718.5px;top:1001.1px;font-size:19.19px;font-weight:normal;color:#9a9a9a;white-space:nowrap;line-height:1;transform:scaleX(0.9848);transform-origin:0 0;">Dec</div>
<svg style="position:absolute;left:0;top:0" width="1100" height="1010"><path d="M917.81 858.31 A83 83 0 0 1 1054.79 889.43 L1023.19 900.56 A49.5 49.5 0 0 0 941.50 882.00 Z" fill="#ddd5e9" stroke="#fff" stroke-width="1"/><path d="M1054.79 889.43 A83 83 0 0 1 1058.79 927.83 L1025.58 923.46 A49.5 49.5 0 0 0 1023.19 900.56 Z" fill="#6c96f0" stroke="#fff" stroke-width="1"/><path d="M1058.79 927.83 A83 83 0 0 1 937.53 990.28 L953.26 960.71 A49.5 49.5 0 0 0 1025.58 923.46 Z" fill="#84d6ab" stroke="#fff" stroke-width="1"/><path d="M937.53 990.28 A83 83 0 0 1 917.81 858.31 L941.50 882.00 A49.5 49.5 0 0 0 953.26 960.71 Z" fill="#6c7896" stroke="#fff" stroke-width="1"/></svg>
<div style="position:absolute;left:1103.3px;top:844.1px;width:13px;height:13px;border-radius:50%;background:#6c7896"></div>
<div style="position:absolute;left:1128.6px;top:839.0px;font-size:24.71px;font-weight:normal;color:#1e1e1e;white-space:nowrap;line-height:1;transform:scaleX(0.9043);transform-origin:0 0;-webkit-text-stroke:0.6px #1e1e1e;">Jornaleros</div>
<div style="position:absolute;left:1103.3px;top:890.3px;width:13px;height:13px;border-radius:50%;background:#ddd5e9"></div>
<div style="position:absolute;left:1127.7px;top:884.1px;font-size:24.71px;font-weight:normal;color:#1e1e1e;white-space:nowrap;line-height:1;transform:scaleX(0.8989);transform-origin:0 0;-webkit-text-stroke:0.6px #1e1e1e;">Capatáz</div>
<div style="position:absolute;left:1103.3px;top:936.5px;width:13px;height:13px;border-radius:50%;background:#84d6ab"></div>
<div style="position:absolute;left:1128.6px;top:928.7px;font-size:24.71px;font-weight:normal;color:#1e1e1e;white-space:nowrap;line-height:1;transform:scaleX(0.8954);transform-origin:0 0;-webkit-text-stroke:0.6px #1e1e1e;">Jefe de cam...</div>
<div style="position:absolute;left:1103.3px;top:979.5px;width:13px;height:13px;border-radius:50%;background:#6c96f0"></div>
<div style="position:absolute;left:1127.7px;top:972.3px;font-size:24.71px;font-weight:normal;color:#1e1e1e;white-space:nowrap;line-height:1;transform:scaleX(0.9493);transform-origin:0 0;-webkit-text-stroke:0.6px #1e1e1e;">Chofer</div>
<div style="position:absolute;left:1366.8px;top:837.9px;font-size:26.89px;font-weight:normal;color:#1a1a1a;white-space:nowrap;line-height:1;transform:scaleX(0.9600);transform-origin:0 0;-webkit-text-stroke:0.7px #1a1a1a;">Field</div>
<div style="position:absolute;left:1494.2px;top:837.0px;width:235.8px;height:25.4px;background:#8ccbed;border-radius:10px;"></div>
<div style="position:absolute;left:1502.9px;top:839.8px;font-size:23.26px;font-weight:normal;color:#ffffff;white-space:nowrap;line-height:1;transform:scaleX(1.1194);transform-origin:0 0;-webkit-text-stroke:0.4px #ffffff;">427</div>
<div style="position:absolute;left:1366.8px;top:884.8px;font-size:26.89px;font-weight:normal;color:#1a1a1a;white-space:nowrap;line-height:1;transform:scaleX(0.9440);transform-origin:0 0;-webkit-text-stroke:0.7px #1a1a1a;">Harvest</div>
<div style="position:absolute;left:1494.2px;top:883.0px;width:194.8px;height:25.4px;background:#7066ee;border-radius:10px;"></div>
<div style="position:absolute;left:1502.9px;top:885.8px;font-size:23.26px;font-weight:normal;color:#ffffff;white-space:nowrap;line-height:1;transform:scaleX(1.0703);transform-origin:0 0;-webkit-text-stroke:0.4px #ffffff;">224</div>
<div style="position:absolute;left:1366.8px;top:930.2px;font-size:26.89px;font-weight:normal;color:#1a1a1a;white-space:nowrap;line-height:1;transform:scaleX(0.9484);transform-origin:0 0;-webkit-text-stroke:0.7px #1a1a1a;">Nursery</div>
<div style="position:absolute;left:1494.2px;top:929.0px;width:172.8px;height:25.4px;background:#f0c454;border-radius:10px;"></div>
<div style="position:absolute;left:1502.9px;top:931.8px;font-size:23.26px;font-weight:normal;color:#ffffff;white-space:nowrap;line-height:1;transform:scaleX(1.1250);transform-origin:0 0;-webkit-text-stroke:0.4px #ffffff;">99</div>
<div style="position:absolute;left:1366.9px;top:976.6px;font-size:26.89px;font-weight:normal;color:#1a1a1a;white-space:nowrap;line-height:1;transform:scaleX(0.9069);transform-origin:0 0;-webkit-text-stroke:0.7px #1a1a1a;">Expense</div>
<div style="position:absolute;left:1494.2px;top:975.5px;width:79.8px;height:25.4px;background:#86d8ac;border-radius:10px;"></div>
<div style="position:absolute;left:1502.9px;top:978.3px;font-size:23.26px;font-weight:normal;color:#ffffff;white-space:nowrap;line-height:1;transform:scaleX(1.1250);transform-origin:0 0;-webkit-text-stroke:0.4px #ffffff;">36</div>
<div style="position:absolute;left:1878.1px;top:636.4px;font-size:29.07px;font-weight:normal;color:#8a8a8a;white-space:nowrap;line-height:1;transform:scaleX(0.9231);transform-origin:0 0;-webkit-text-stroke:0.4px #8a8a8a;">Today’s weather</div>
<div style="position:absolute;left:1877.1px;top:690.8px;font-size:29.80px;font-weight:bold;color:#111;white-space:nowrap;line-height:1;transform:scaleX(0.9540);transform-origin:0 0;">Friday</div>
<div style="position:absolute;left:1968.1px;top:690.8px;font-size:29.80px;font-weight:normal;color:#8a8a8a;white-space:nowrap;line-height:1;transform:scaleX(0.9302);transform-origin:0 0;">(24th april, 2024)</div>
<svg style="position:absolute;left:1880px;top:745px" width="150" height="140" viewBox="0 0 150 140">
<g stroke="#f0b030" stroke-width="4.4" fill="none" stroke-linecap="round">
<circle cx="56.4" cy="53" r="26.5"/>
<line x1="37.8" y1="12.2" x2="43.4" y2="22.6"/><line x1="74.8" y1="12.2" x2="70.8" y2="22.6"/>
<line x1="11.5" y1="36" x2="23.5" y2="41"/><line x1="101.2" y1="36" x2="89.5" y2="41"/>
<line x1="11.5" y1="75" x2="23.5" y2="70.3"/>
</g>
<g fill="#1a5fbf">
<circle cx="111" cy="111" r="22.8"/><circle cx="82" cy="94.5" r="35"/><circle cx="45" cy="95" r="19.5"/><circle cx="37" cy="111" r="22.8"/>
<rect x="37" y="90.5" width="74" height="43.3"/>
</g>
<g fill="#ffffff">
<circle cx="111" cy="111" r="18.3"/><circle cx="82" cy="94.5" r="30.5"/><circle cx="45" cy="95" r="15"/><circle cx="37" cy="111" r="18.3"/>
<rect x="37" y="95" width="74" height="34.3"/>
</g>
</svg>
<div style="position:absolute;left:2052.0px;top:777.9px;font-size:63.37px;font-weight:normal;color:#111;white-space:nowrap;line-height:1;-webkit-text-stroke:1.2px #111;">28°C</div>
<div style="position:absolute;left:2053.0px;top:855.4px;font-size:27.62px;font-weight:normal;color:#8a8a8a;white-space:nowrap;line-height:1;transform:scaleX(0.9842);transform-origin:0 0;">5:35 PM (17:35 hours)</div>
<div style="position:absolute;left:1877.1px;top:922.5px;font-size:28.34px;font-weight:normal;color:#1a1a1a;white-space:nowrap;line-height:1;transform:scaleX(0.9441);transform-origin:0 0;-webkit-text-stroke:0.6px #1a1a1a;">Rainfall: 0mm</div>
<div style="position:absolute;left:1877.0px;top:968.0px;font-size:28.34px;font-weight:normal;color:#1a1a1a;white-space:nowrap;line-height:1;transform:scaleX(0.9778);transform-origin:0 0;-webkit-text-stroke:0.6px #1a1a1a;">Humidity: 48%</div>
<div style="position:absolute;left:2139.8px;top:922.5px;font-size:28.34px;font-weight:normal;color:#1a1a1a;white-space:nowrap;line-height:1;transform:scaleX(0.9776);transform-origin:0 0;-webkit-text-stroke:0.6px #1a1a1a;">UVI: 8</div>
<div style="position:absolute;left:2141.8px;top:968.0px;font-size:28.34px;font-weight:normal;color:#1a1a1a;white-space:nowrap;line-height:1;transform:scaleX(0.9801);transform-origin:0 0;-webkit-text-stroke:0.6px #1a1a1a;">Wind: 5m/s</div>
<div style="position:absolute;left:2374.0px;top:634.5px;width:2.0px;height:371.5px;background:#ececec;border-radius:0px;"></div>
<div style="position:absolute;left:2427.7px;top:756.3px;width:331.8px;height:2.0px;background:#ececec;border-radius:0px;"></div>
<div style="position:absolute;left:2427.7px;top:888.7px;width:331.8px;height:2.0px;background:#ececec;border-radius:0px;"></div>
<div style="position:absolute;left:2440.1px;top:670.9px;font-size:29.07px;font-weight:bold;color:#111;white-space:nowrap;line-height:1;transform:scaleX(0.9079);transform-origin:0 0;">Apr 25</div>
<div style="position:absolute;left:2653.9px;top:643.5px;font-size:25.44px;font-weight:normal;color:#1e1e1e;white-space:nowrap;line-height:1;transform:scaleX(0.9418);transform-origin:0 0;-webkit-text-stroke:0.5px #1e1e1e;">27°C</div>
<svg style="position:absolute;left:2616px;top:645.0px" width="24" height="24"><circle cx="8" cy="8" r="4" fill="none" stroke="#4a90f0" stroke-width="1.6"/><path d="M4 20 Q2 13 9 13 Q12 8 17 11 Q21 12 21 17 Q22 20 19 20 Z" fill="#fff" stroke="#4a90f0" stroke-width="1.6"/></svg>
<div style="position:absolute;left:2653.9px;top:676.5px;font-size:25.44px;font-weight:normal;color:#1e1e1e;white-space:nowrap;line-height:1;transform:scaleX(0.9341);transform-origin:0 0;-webkit-text-stroke:0.5px #1e1e1e;">0.8 mm</div>
<svg style="position:absolute;left:2616px;top:678.0px" width="24" height="24"><path d="M3 14 Q2 8 8 8 Q11 3 16 6 Q21 7 21 12 Q22 14 20 14 Z" fill="none" stroke="#4a90f0" stroke-width="1.6"/><path d="M3 17 H21 M3 20 H21" stroke="#4a90f0" stroke-width="1.4"/></svg>
<div style="position:absolute;left:2653.9px;top:709.5px;font-size:25.44px;font-weight:normal;color:#1e1e1e;white-space:nowrap;line-height:1;transform:scaleX(0.9224);transform-origin:0 0;-webkit-text-stroke:0.5px #1e1e1e;">61%</div>
<svg style="position:absolute;left:2616px;top:711.0px" width="24" height="24"><path d="M11 3 Q5 11 5 15 A6 6 0 0 0 17 15 Q17 11 11 3 Z" fill="none" stroke="#4a90f0" stroke-width="1.8"/></svg>
<div style="position:absolute;left:2440.1px;top:805.4px;font-size:29.07px;font-weight:bold;color:#111;white-space:nowrap;line-height:1;transform:scaleX(0.9079);transform-origin:0 0;">Apr 26</div>
<div style="position:absolute;left:2653.9px;top:778.0px;font-size:25.44px;font-weight:normal;color:#1e1e1e;white-space:nowrap;line-height:1;transform:scaleX(0.9418);transform-origin:0 0;-webkit-text-stroke:0.5px #1e1e1e;">26°C</div>
<svg style="position:absolute;left:2616px;top:779.5px" width="24" height="24"><circle cx="8" cy="8" r="4" fill="none" stroke="#4a90f0" stroke-width="1.6"/><path d="M4 20 Q2 13 9 13 Q12 8 17 11 Q21 12 21 17 Q22 20 19 20 Z" fill="#fff" stroke="#4a90f0" stroke-width="1.6"/></svg>
<div style="position:absolute;left:2653.9px;top:811.0px;font-size:25.44px;font-weight:normal;color:#1e1e1e;white-space:nowrap;line-height:1;transform:scaleX(0.9341);transform-origin:0 0;-webkit-text-stroke:0.5px #1e1e1e;">0.7 mm</div>
<svg style="position:absolute;left:2616px;top:812.5px" width="24" height="24"><path d="M3 14 Q2 8 8 8 Q11 3 16 6 Q21 7 21 12 Q22 14 20 14 Z" fill="none" stroke="#4a90f0" stroke-width="1.6"/><path d="M3 17 H21 M3 20 H21" stroke="#4a90f0" stroke-width="1.4"/></svg>
<div style="position:absolute;left:2654.8px;top:844.0px;font-size:25.44px;font-weight:normal;color:#1e1e1e;white-space:nowrap;line-height:1;transform:scaleX(0.9040);transform-origin:0 0;-webkit-text-stroke:0.5px #1e1e1e;">49%</div>
<svg style="position:absolute;left:2616px;top:845.5px" width="24" height="24"><path d="M11 3 Q5 11 5 15 A6 6 0 0 0 17 15 Q17 11 11 3 Z" fill="none" stroke="#4a90f0" stroke-width="1.8"/></svg>
<div style="position:absolute;left:2440.1px;top:936.7px;font-size:29.07px;font-weight:bold;color:#111;white-space:nowrap;line-height:1;transform:scaleX(0.9182);transform-origin:0 0;">Apr 27</div>
<div style="position:absolute;left:2653.9px;top:910.1px;font-size:25.44px;font-weight:normal;color:#1e1e1e;white-space:nowrap;line-height:1;transform:scaleX(0.9418);transform-origin:0 0;-webkit-text-stroke:0.5px #1e1e1e;">28°C</div>
<svg style="position:absolute;left:2616px;top:911.6px" width="24" height="24"><circle cx="8" cy="8" r="4" fill="none" stroke="#4a90f0" stroke-width="1.6"/><path d="M4 20 Q2 13 9 13 Q12 8 17 11 Q21 12 21 17 Q22 20 19 20 Z" fill="#fff" stroke="#4a90f0" stroke-width="1.6"/></svg>
<div style="position:absolute;left:2653.9px;top:943.1px;font-size:25.44px;font-weight:normal;color:#1e1e1e;white-space:nowrap;line-height:1;transform:scaleX(0.9341);transform-origin:0 0;-webkit-text-stroke:0.5px #1e1e1e;">0.3 mm</div>
<svg style="position:absolute;left:2616px;top:944.6px" width="24" height="24"><path d="M3 14 Q2 8 8 8 Q11 3 16 6 Q21 7 21 12 Q22 14 20 14 Z" fill="none" stroke="#4a90f0" stroke-width="1.6"/><path d="M3 17 H21 M3 20 H21" stroke="#4a90f0" stroke-width="1.4"/></svg>
<div style="position:absolute;left:2653.9px;top:976.1px;font-size:25.44px;font-weight:normal;color:#1e1e1e;white-space:nowrap;line-height:1;transform:scaleX(0.9224);transform-origin:0 0;-webkit-text-stroke:0.5px #1e1e1e;">55%</div>
<svg style="position:absolute;left:2616px;top:977.6px" width="24" height="24"><path d="M11 3 Q5 11 5 15 A6 6 0 0 0 17 15 Q17 11 11 3 Z" fill="none" stroke="#4a90f0" stroke-width="1.8"/></svg>
<div style="position:absolute;left:390.4px;top:1276.6px;font-size:27.62px;font-weight:normal;color:#8a8a8a;white-space:nowrap;line-height:1;transform:scaleX(0.9426);transform-origin:0 0;-webkit-text-stroke:0.3px #8a8a8a;">Harvested</div>
<div style="position:absolute;left:390.2px;top:1324.3px;font-size:32.70px;font-weight:normal;color:#111;white-space:nowrap;line-height:1;transform:scaleX(0.9146);transform-origin:0 0;-webkit-text-stroke:0.8px #111;">194,615.75 lat</div>
<div style="position:absolute;left:392.0px;top:1368.0px;width:300.0px;height:11.0px;background:#e3e3e3;border-radius:6px;"></div>
<div style="position:absolute;left:392.0px;top:1368.0px;width:228.0px;height:11.0px;background:#5b8def;border-radius:6px;"></div>
<div style="position:absolute;left:704.0px;top:1361.3px;font-size:22.82px;font-weight:normal;color:#333;white-space:nowrap;line-height:1;transform:scaleX(0.8495);transform-origin:0 0;-webkit-text-stroke:0.35px #333;">(88.51%)</div>
<div style="position:absolute;left:390.1px;top:1395.3px;font-size:22.82px;font-weight:normal;color:#9a9a9a;white-space:nowrap;line-height:1;transform:scaleX(0.9479);transform-origin:0 0;">Estimated: 219,871.45 lat</div>
<div style="position:absolute;left:383.0px;top:1452.0px;width:398.0px;height:2.0px;background:#ececec;border-radius:0px;"></div>
<div style="position:absolute;left:390.1px;top:1482.4px;font-size:27.62px;font-weight:normal;color:#8a8a8a;white-space:nowrap;line-height:1;transform:scaleX(0.9346);transform-origin:0 0;-webkit-text-stroke:0.3px #8a8a8a;">Harvest Yield</div>
<div style="position:absolute;left:391.1px;top:1530.0px;font-size:32.70px;font-weight:normal;color:#111;white-space:nowrap;line-height:1;transform:scaleX(0.9362);transform-origin:0 0;-webkit-text-stroke:0.8px #111;">511.94 lat / mz</div>
<div style="position:absolute;left:392.0px;top:1574.0px;width:300.0px;height:11.5px;background:#e3e3e3;border-radius:6px;"></div>
<div style="position:absolute;left:392.0px;top:1574.0px;width:228.0px;height:11.5px;background:#5b8def;border-radius:6px;"></div>
<div style="position:absolute;left:704.0px;top:1567.2px;font-size:22.82px;font-weight:normal;color:#333;white-space:nowrap;line-height:1;transform:scaleX(0.8385);transform-origin:0 0;-webkit-text-stroke:0.35px #333;">(89.2%)</div>
<div style="position:absolute;left:390.1px;top:1601.2px;font-size:22.82px;font-weight:normal;color:#9a9a9a;white-space:nowrap;line-height:1;transform:scaleX(0.9533);transform-origin:0 0;">Estimated: 573.96 lat / mz</div>
<svg style="position:absolute;left:900px;top:1260px" width="1900" height="340">
<rect x="22.600000000000023" y="36.0" width="1826.9" height="2" fill="#f0f0f0"/><rect x="22.600000000000023" y="92.4" width="1826.9" height="2" fill="#f0f0f0"/><rect x="22.600000000000023" y="148.2" width="1826.9" height="2" fill="#f0f0f0"/><rect x="22.600000000000023" y="203.7" width="1826.9" height="2" fill="#f0f0f0"/><rect x="22.600000000000023" y="260.0" width="1826.9" height="2" fill="#f0f0f0"/>
<rect x="22.600000000000023" y="316.2" width="1826.9" height="2.4" fill="#e2e2e2"/>
<polygon points="24.0,317.4 24.0,317.4 229.7,316.9 294.5,314.0 407.0,309.8 491.7,304.2 550.0,300.0 578.0,295.7 612.0,294.3 634.5,290.0 691.0,276.0 719.0,267.5 761.3,259.0 803.6,245.0 826.0,239.4 860.0,228.0 902.0,214.0 924.8,205.6 972.7,202.0 1000.8,184.4 1029.0,174.6 1071.3,153.4 1099.5,147.8 1141.7,126.7 1184.0,115.4 1233.8,113.4 1256.4,104.0 1284.5,100.0 1312.7,94.0 1346.5,88.6 1397.0,81.6 1453.6,78.8 1495.9,74.5 1538.0,69.0 1594.5,65.5 1669.0,58.5 1669.0,317.4" fill="#e1f3ea"/>
<polygon points="24.0,317.4 24.0,317.4 181.8,315.4 294.5,313.5 365.0,307.0 421.0,304.2 463.5,297.0 497.4,293.0 520.0,286.0 550.0,283.0 586.6,273.0 614.8,269.0 651.4,262.7 674.0,260.0 696.5,256.3 724.7,245.0 752.9,236.6 798.0,218.0 826.0,212.6 854.3,202.7 888.0,193.0 913.5,188.6 972.7,187.0 1000.8,178.0 1029.0,174.6 1071.3,156.0 1113.5,146.4 1141.7,135.0 1170.0,127.5 1198.0,122.0 1242.0,123.0 1279.0,111.0 1326.8,102.7 1374.7,96.5 1411.0,94.0 1481.8,87.2 1538.0,87.2 1594.5,85.8 1669.0,83.0 1669.0,317.4" fill="#dcdfe9"/>
<polygon points="24.0,317.4 24.0,317.4 26.0,317.4 28.0,317.4 30.0,317.4 32.0,317.4 34.0,317.4 36.0,317.4 38.0,317.4 40.0,317.4 42.0,317.4 44.0,317.4 46.0,317.3 48.0,317.3 50.0,317.3 52.0,317.3 54.0,317.3 56.0,317.3 58.0,317.3 60.0,317.3 62.0,317.3 64.0,317.3 66.0,317.3 68.0,317.3 70.0,317.3 72.0,317.3 74.0,317.3 76.0,317.3 78.0,317.3 80.0,317.3 82.0,317.3 84.0,317.3 86.0,317.2 88.0,317.2 90.0,317.2 92.0,317.2 94.0,317.2 96.0,317.2 98.0,317.2 100.0,317.2 102.0,317.2 104.0,317.2 106.0,317.2 108.0,317.2 110.0,317.2 112.0,317.2 114.0,317.2 116.0,317.2 118.0,317.2 120.0,317.2 122.0,317.2 124.0,317.2 126.0,317.2 128.0,317.1 130.0,317.1 132.0,317.1 134.0,317.1 136.0,317.1 138.0,317.1 140.0,317.1 142.0,317.1 144.0,317.1 146.0,317.1 148.0,317.1 150.0,317.1 152.0,317.1 154.0,317.1 156.0,317.1 158.0,317.1 160.0,317.1 162.0,317.1 164.0,317.1 166.0,317.1 168.0,317.0 170.0,317.0 172.0,317.0 174.0,317.0 176.0,317.0 178.0,317.0 180.0,317.0 182.0,317.0 184.0,317.0 186.0,317.0 188.0,317.0 190.0,317.0 192.0,317.0 194.0,317.0 196.0,317.0 198.0,317.0 200.0,317.0 202.0,317.0 204.0,317.0 206.0,317.0 208.0,317.0 210.0,316.9 212.0,316.9 214.0,316.9 216.0,316.9 218.0,316.9 220.0,316.9 222.0,316.9 224.0,316.9 226.0,316.9 228.0,316.9 230.0,316.9 232.0,316.8 234.0,316.7 236.0,316.6 238.0,316.5 240.0,316.4 242.0,316.3 244.0,316.3 246.0,316.2 248.0,316.1 250.0,316.0 252.0,315.9 254.0,315.8 256.0,315.7 258.0,315.6 260.0,315.5 262.0,315.5 264.0,315.4 266.0,315.3 268.0,315.2 270.0,315.1 272.0,315.0 274.0,314.9 276.0,314.8 278.0,314.7 280.0,314.6 282.0,314.6 284.0,314.5 286.0,314.4 288.0,314.3 290.0,314.2 292.0,314.1 294.0,314.0 296.0,313.9 298.0,313.9 300.0,313.8 302.0,313.7 304.0,313.6 306.0,313.6 308.0,313.5 310.0,313.4 312.0,313.3 314.0,313.3 316.0,313.2 318.0,313.1 320.0,313.0 322.0,313.0 324.0,312.9 326.0,312.8 328.0,312.7 330.0,312.7 332.0,312.6 334.0,312.5 336.0,312.5 338.0,312.4 340.0,312.3 342.0,312.2 344.0,312.2 346.0,312.1 348.0,312.0 350.0,311.9 352.0,311.9 354.0,311.8 356.0,311.7 358.0,311.6 360.0,311.6 362.0,311.5 364.0,311.4 366.0,311.3 368.0,311.3 370.0,311.2 372.0,311.1 374.0,311.0 376.0,311.0 378.0,310.9 380.0,310.8 382.0,310.7 384.0,310.7 386.0,310.6 388.0,310.5 390.0,310.4 392.0,310.4 394.0,310.3 396.0,310.2 398.0,310.1 400.0,310.1 402.0,310.0 404.0,309.9 406.0,309.8 408.0,309.7 410.0,309.6 412.0,309.5 414.0,309.3 416.0,309.2 418.0,309.1 420.0,308.9 422.0,308.8 424.0,308.7 426.0,308.5 428.0,308.4 430.0,308.3 432.0,308.1 434.0,308.0 436.0,307.9 438.0,307.8 440.0,307.6 442.0,307.5 444.0,307.4 446.0,307.2 448.0,307.1 450.0,307.0 452.0,306.8 454.0,306.7 456.0,306.6 458.0,306.4 460.0,306.3 462.0,306.2 464.0,306.0 466.0,305.9 468.0,305.8 470.0,305.6 472.0,305.5 474.0,305.4 476.0,305.2 478.0,305.1 480.0,305.0 482.0,304.8 484.0,304.7 486.0,304.6 488.0,304.4 490.0,304.3 492.0,304.2 494.0,304.0 496.0,303.9 498.0,303.7 500.0,303.6 502.0,303.5 504.0,303.3 506.0,303.2 508.0,303.0 510.0,302.9 512.0,302.7 514.0,302.6 516.0,302.4 518.0,302.3 520.0,302.2 522.0,302.0 524.0,301.9 526.0,301.7 528.0,301.6 530.0,301.4 532.0,301.3 534.0,301.2 536.0,301.0 538.0,300.9 540.0,300.7 542.0,300.6 544.0,300.4 546.0,300.3 548.0,300.1 550.0,300.0 552.0,299.7 554.0,299.4 556.0,299.1 558.0,298.8 560.0,298.5 562.0,298.2 564.0,297.8 566.0,297.5 568.0,297.2 570.0,296.9 572.0,296.6 574.0,296.3 576.0,296.0 578.0,295.7 580.0,295.6 582.0,295.5 584.0,295.5 586.0,295.4 588.0,295.3 590.0,295.2 592.0,295.1 594.0,295.0 596.0,295.0 598.0,294.9 600.0,294.8 602.0,294.7 604.0,294.6 606.0,294.5 608.0,294.5 610.0,294.4 612.0,294.3 614.0,293.9 616.0,293.5 618.0,293.2 620.0,292.8 622.0,292.4 624.0,292.0 626.0,291.6 628.0,291.2 630.0,290.9 632.0,290.5 634.0,290.1 636.0,289.6 638.0,289.1 640.0,288.6 642.0,288.1 644.0,287.6 646.0,287.2 648.0,286.7 650.0,286.2 652.0,285.7 654.0,285.2 656.0,284.7 658.0,284.2 660.0,283.7 662.0,283.2 664.0,282.7 666.0,282.2 668.0,281.7 670.0,281.2 672.0,280.7 674.0,280.2 676.0,279.7 678.0,279.2 680.0,278.7 682.0,278.2 684.0,277.7 686.0,277.2 688.0,276.7 690.0,276.2 692.0,275.7 694.0,275.1 696.0,274.5 698.0,273.9 700.0,273.3 702.0,272.7 704.0,272.1 706.0,271.4 708.0,270.8 710.0,270.2 712.0,269.6 714.0,269.0 716.0,268.4 718.0,267.8 720.0,267.3 722.0,266.9 724.0,266.5 726.0,266.1 728.0,265.7 730.0,265.3 732.0,264.9 734.0,264.5 736.0,264.1 738.0,263.7 740.0,263.3 742.0,262.9 744.0,262.5 746.0,262.1 748.0,261.7 750.0,261.3 752.0,260.9 754.0,260.5 756.0,260.1 758.0,259.7 760.0,259.3 762.0,258.8 764.0,258.1 766.0,257.4 768.0,256.8 770.0,256.1 772.0,255.5 774.0,254.8 776.0,254.1 778.0,253.5 780.0,252.8 782.0,252.1 784.0,251.5 786.0,250.8 788.0,250.2 790.0,249.5 792.0,248.8 794.0,248.2 796.0,247.5 798.0,246.9 800.0,246.2 802.0,245.5 804.0,244.9 806.0,244.4 808.0,243.9 810.0,243.4 812.0,242.9 814.0,242.4 816.0,241.9 818.0,241.4 820.0,240.9 822.0,240.4 824.0,239.9 826.0,239.4 828.0,238.7 830.0,238.1 832.0,237.4 834.0,236.7 836.0,236.0 838.0,235.4 840.0,234.7 842.0,234.0 844.0,233.4 846.0,232.7 848.0,232.0 850.0,231.4 852.0,230.7 854.0,230.0 856.0,229.3 858.0,228.7 860.0,228.0 862.0,227.3 864.0,226.7 866.0,226.0 868.0,225.3 870.0,224.7 872.0,224.0 874.0,223.3 876.0,222.7 878.0,222.0 880.0,221.3 882.0,220.7 884.0,220.0 886.0,219.3 888.0,218.7 890.0,218.0 892.0,217.3 894.0,216.7 896.0,216.0 898.0,215.3 900.0,214.7 902.0,214.0 904.0,213.3 906.0,212.5 908.0,211.8 910.0,211.1 912.0,210.3 914.0,209.6 916.0,208.8 918.0,208.1 920.0,207.4 922.0,206.6 924.0,205.9 926.0,205.5 928.0,205.4 930.0,205.2 932.0,205.1 934.0,204.9 936.0,204.8 938.0,204.6 940.0,204.5 942.0,204.3 944.0,204.2 946.0,204.0 948.0,203.9 950.0,203.7 952.0,203.6 954.0,203.4 956.0,203.3 958.0,203.1 960.0,203.0 962.0,202.8 964.0,202.7 966.0,202.5 968.0,202.4 970.0,202.2 972.0,202.1 974.0,201.2 976.0,199.9 978.0,198.7 980.0,197.4 982.0,196.2 984.0,194.9 986.0,193.7 988.0,192.4 990.0,191.2 992.0,189.9 994.0,188.7 996.0,187.4 998.0,186.2 1000.0,184.9 1002.0,184.0 1004.0,183.3 1006.0,182.6 1008.0,181.9 1010.0,181.2 1012.0,180.5 1014.0,179.8 1016.0,179.1 1018.0,178.4 1020.0,177.7 1022.0,177.0 1024.0,176.3 1026.0,175.6 1028.0,174.9 1030.0,174.2 1032.0,173.3 1034.0,172.4 1036.0,171.5 1038.0,170.6 1040.0,169.8 1042.0,168.9 1044.0,168.0 1046.0,167.1 1048.0,166.2 1050.0,165.4 1052.0,164.5 1054.0,163.6 1056.0,162.7 1058.0,161.8 1060.0,161.0 1062.0,160.1 1064.0,159.2 1066.0,158.3 1068.0,157.5 1070.0,156.6 1072.0,155.8 1074.0,155.4 1076.0,154.9 1078.0,154.5 1080.0,154.0 1082.0,153.6 1084.0,153.1 1086.0,152.7 1088.0,152.2 1090.0,151.7 1092.0,151.3 1094.0,150.8 1096.0,150.4 1098.0,149.9 1100.0,149.5 1102.0,149.0 1104.0,148.6 1106.0,148.1 1108.0,147.7 1110.0,147.2 1112.0,146.7 1114.0,146.2 1116.0,145.4 1118.0,144.6 1120.0,143.8 1122.0,143.0 1124.0,142.2 1126.0,141.3 1128.0,140.5 1130.0,139.7 1132.0,138.9 1134.0,138.1 1136.0,137.3 1138.0,136.5 1140.0,135.7 1142.0,134.9 1144.0,134.4 1146.0,133.9 1148.0,133.3 1150.0,132.8 1152.0,132.3 1154.0,131.7 1156.0,131.2 1158.0,130.7 1160.0,130.2 1162.0,129.6 1164.0,129.1 1166.0,128.6 1168.0,128.0 1170.0,127.5 1172.0,127.1 1174.0,126.7 1176.0,126.3 1178.0,125.9 1180.0,125.5 1182.0,125.1 1184.0,124.8 1186.0,124.4 1188.0,124.0 1190.0,123.6 1192.0,123.2 1194.0,122.8 1196.0,122.4 1198.0,122.0 1200.0,122.0 1202.0,122.1 1204.0,122.1 1206.0,122.2 1208.0,122.2 1210.0,122.3 1212.0,122.3 1214.0,122.4 1216.0,122.4 1218.0,122.5 1220.0,122.5 1222.0,122.5 1224.0,122.6 1226.0,122.6 1228.0,122.7 1230.0,122.7 1232.0,122.8 1234.0,122.8 1236.0,122.9 1238.0,122.9 1240.0,123.0 1242.0,123.0 1244.0,122.4 1246.0,121.7 1248.0,121.1 1250.0,120.4 1252.0,119.8 1254.0,119.1 1256.0,118.5 1258.0,117.8 1260.0,117.2 1262.0,116.5 1264.0,115.9 1266.0,115.2 1268.0,114.6 1270.0,113.9 1272.0,113.3 1274.0,112.6 1276.0,112.0 1278.0,111.3 1280.0,110.8 1282.0,110.5 1284.0,110.1 1286.0,109.8 1288.0,109.4 1290.0,109.1 1292.0,108.7 1294.0,108.4 1296.0,108.0 1298.0,107.7 1300.0,107.4 1302.0,107.0 1304.0,106.7 1306.0,106.3 1308.0,106.0 1310.0,105.6 1312.0,105.3 1314.0,104.9 1316.0,104.6 1318.0,104.2 1320.0,103.9 1322.0,103.5 1324.0,103.2 1326.0,102.8 1328.0,102.5 1330.0,102.3 1332.0,102.0 1334.0,101.8 1336.0,101.5 1338.0,101.3 1340.0,101.0 1342.0,100.7 1344.0,100.5 1346.0,100.2 1348.0,100.0 1350.0,99.7 1352.0,99.4 1354.0,99.2 1356.0,98.9 1358.0,98.7 1360.0,98.4 1362.0,98.1 1364.0,97.9 1366.0,97.6 1368.0,97.4 1370.0,97.1 1372.0,96.8 1374.0,96.6 1376.0,96.4 1378.0,96.3 1380.0,96.1 1382.0,96.0 1384.0,95.9 1386.0,95.7 1388.0,95.6 1390.0,95.4 1392.0,95.3 1394.0,95.2 1396.0,95.0 1398.0,94.9 1400.0,94.8 1402.0,94.6 1404.0,94.5 1406.0,94.3 1408.0,94.2 1410.0,94.1 1412.0,93.9 1414.0,93.7 1416.0,93.5 1418.0,93.3 1420.0,93.1 1422.0,92.9 1424.0,92.8 1426.0,92.6 1428.0,92.4 1430.0,92.2 1432.0,92.0 1434.0,91.8 1436.0,91.6 1438.0,91.4 1440.0,91.2 1442.0,91.0 1444.0,90.8 1446.0,90.6 1448.0,90.4 1450.0,90.3 1452.0,90.1 1454.0,89.9 1456.0,89.7 1458.0,89.5 1460.0,89.3 1462.0,89.1 1464.0,88.9 1466.0,88.7 1468.0,88.5 1470.0,88.3 1472.0,88.1 1474.0,87.9 1476.0,87.8 1478.0,87.6 1480.0,87.4 1482.0,87.2 1484.0,87.2 1486.0,87.2 1488.0,87.2 1490.0,87.2 1492.0,87.2 1494.0,87.2 1496.0,87.2 1498.0,87.2 1500.0,87.2 1502.0,87.2 1504.0,87.2 1506.0,87.2 1508.0,87.2 1510.0,87.2 1512.0,87.2 1514.0,87.2 1516.0,87.2 1518.0,87.2 1520.0,87.2 1522.0,87.2 1524.0,87.2 1526.0,87.2 1528.0,87.2 1530.0,87.2 1532.0,87.2 1534.0,87.2 1536.0,87.2 1538.0,87.2 1540.0,87.2 1542.0,87.1 1544.0,87.1 1546.0,87.0 1548.0,87.0 1550.0,86.9 1552.0,86.9 1554.0,86.8 1556.0,86.8 1558.0,86.7 1560.0,86.7 1562.0,86.6 1564.0,86.6 1566.0,86.5 1568.0,86.5 1570.0,86.4 1572.0,86.4 1574.0,86.3 1576.0,86.3 1578.0,86.2 1580.0,86.2 1582.0,86.1 1584.0,86.1 1586.0,86.0 1588.0,86.0 1590.0,85.9 1592.0,85.9 1594.0,85.8 1596.0,85.7 1598.0,85.7 1600.0,85.6 1602.0,85.5 1604.0,85.4 1606.0,85.4 1608.0,85.3 1610.0,85.2 1612.0,85.1 1614.0,85.1 1616.0,85.0 1618.0,84.9 1620.0,84.8 1622.0,84.8 1624.0,84.7 1626.0,84.6 1628.0,84.5 1630.0,84.5 1632.0,84.4 1634.0,84.3 1636.0,84.2 1638.0,84.2 1640.0,84.1 1642.0,84.0 1644.0,83.9 1646.0,83.9 1648.0,83.8 1650.0,83.7 1652.0,83.6 1654.0,83.6 1656.0,83.5 1658.0,83.4 1660.0,83.3 1662.0,83.3 1664.0,83.2 1666.0,83.1 1668.0,83.0 1668.0,317.4" fill="#bed5d5"/>
<polygon points="24.0,317.4 24.0,317.4 410.0,317.4 620.0,316.9 676.8,314.0 741.6,308.4 775.4,304.2 817.7,302.8 860.0,291.5 924.8,280.2 972.7,278.8 1006.5,269.0 1029.0,266.0 1071.3,253.5 1122.0,238.0 1155.8,235.0 1198.0,212.6 1225.4,207.0 1270.4,181.0 1293.0,174.6 1335.0,153.4 1374.7,145.0 1425.4,143.6 1459.2,135.0 1495.9,130.3 1538.0,123.8 1588.8,118.2 1628.3,116.8 1669.0,111.7 1669.0,317.4" fill="#a9c4d1"/>
<polygon points="1669.0,317.4 1669.0,111.7 1735.4,107.0 1777.6,104.0 1822.7,99.3 1822.7,317.4" fill="#d9e5fa"/>
<rect x="22.600000000000023" y="36.0" width="1799.4" height="2.4" fill="#000" opacity="0.035"/><rect x="22.600000000000023" y="92.4" width="1799.4" height="2.4" fill="#000" opacity="0.035"/><rect x="22.600000000000023" y="148.2" width="1799.4" height="2.4" fill="#000" opacity="0.035"/><rect x="22.600000000000023" y="203.7" width="1799.4" height="2.4" fill="#000" opacity="0.035"/><rect x="22.600000000000023" y="260.0" width="1799.4" height="2.4" fill="#000" opacity="0.035"/>
<polyline points="24.0,317.4 229.7,316.9 294.5,314.0 407.0,309.8 491.7,304.2 550.0,300.0 578.0,295.7 612.0,294.3 634.5,290.0 691.0,276.0 719.0,267.5 761.3,259.0 803.6,245.0 826.0,239.4 860.0,228.0 902.0,214.0 924.8,205.6 972.7,202.0 1000.8,184.4 1029.0,174.6 1071.3,153.4 1099.5,147.8 1141.7,126.7 1184.0,115.4 1233.8,113.4 1256.4,104.0 1284.5,100.0 1312.7,94.0 1346.5,88.6 1397.0,81.6 1453.6,78.8 1495.9,74.5 1538.0,69.0 1594.5,65.5 1669.0,58.5" fill="none" stroke="#80d2a8" stroke-width="3" stroke-linejoin="round"/>
<polyline points="24.0,317.4 181.8,315.4 294.5,313.5 365.0,307.0 421.0,304.2 463.5,297.0 497.4,293.0 520.0,286.0 550.0,283.0 586.6,273.0 614.8,269.0 651.4,262.7 674.0,260.0 696.5,256.3 724.7,245.0 752.9,236.6 798.0,218.0 826.0,212.6 854.3,202.7 888.0,193.0 913.5,188.6 972.7,187.0 1000.8,178.0 1029.0,174.6 1071.3,156.0 1113.5,146.4 1141.7,135.0 1170.0,127.5 1198.0,122.0 1242.0,123.0 1279.0,111.0 1326.8,102.7 1374.7,96.5 1411.0,94.0 1481.8,87.2 1538.0,87.2 1594.5,85.8 1669.0,83.0" fill="none" stroke="#6e7a98" stroke-width="3" stroke-linejoin="round"/>
<polyline points="410.0,317.4 620.0,316.9 676.8,314.0 741.6,308.4 775.4,304.2 817.7,302.8 860.0,291.5 924.8,280.2 972.7,278.8 1006.5,269.0 1029.0,266.0 1071.3,253.5 1122.0,238.0 1155.8,235.0 1198.0,212.6 1225.4,207.0 1270.4,181.0 1293.0,174.6 1335.0,153.4 1374.7,145.0 1425.4,143.6 1459.2,135.0 1495.9,130.3 1538.0,123.8 1588.8,118.2 1628.3,116.8 1669.0,111.7 1735.4,107.0 1777.6,104.0 1822.7,99.3" fill="none" stroke="#6396ea" stroke-width="3" stroke-linejoin="round"/>
</svg>
<div style="position:absolute;left:842.3px;top:1288.5px;font-size:14.39px;font-weight:bold;color:#4a4a4a;white-space:nowrap;line-height:1;transform:scaleX(0.9644);transform-origin:0 0;">250,000 lat</div>
<div style="position:absolute;left:842.3px;top:1344.3px;font-size:14.39px;font-weight:bold;color:#4a4a4a;white-space:nowrap;line-height:1;transform:scaleX(0.9644);transform-origin:0 0;">200,000 lat</div>
<div style="position:absolute;left:841.3px;top:1400.0px;font-size:14.39px;font-weight:bold;color:#4a4a4a;white-space:nowrap;line-height:1;transform:scaleX(0.9778);transform-origin:0 0;">150,000 lat</div>
<div style="position:absolute;left:841.3px;top:1455.8px;font-size:14.39px;font-weight:bold;color:#4a4a4a;white-space:nowrap;line-height:1;transform:scaleX(0.9778);transform-origin:0 0;">100,000 lat</div>
<div style="position:absolute;left:849.2px;top:1511.8px;font-size:14.39px;font-weight:bold;color:#4a4a4a;white-space:nowrap;line-height:1;transform:scaleX(0.9766);transform-origin:0 0;">50,000 lat</div>
<div style="position:absolute;left:885.9px;top:1568.3px;font-size:14.39px;font-weight:bold;color:#4a4a4a;white-space:nowrap;line-height:1;transform:scaleX(0.9241);transform-origin:0 0;">0 lat</div>
<div style="position:absolute;left:910.7px;top:1585.2px;font-size:13.95px;font-weight:bold;color:#4a4a4a;white-space:nowrap;line-height:1;transform:scaleX(0.9167);transform-origin:0 0;">Sep</div>
<div style="position:absolute;left:1171.0px;top:1585.2px;font-size:13.95px;font-weight:bold;color:#4a4a4a;white-space:nowrap;line-height:1;">Oct</div>
<div style="position:absolute;left:1432.5px;top:1585.2px;font-size:13.95px;font-weight:bold;color:#4a4a4a;white-space:nowrap;line-height:1;transform:scaleX(0.8800);transform-origin:0 0;">Nov</div>
<div style="position:absolute;left:1693.1px;top:1585.2px;font-size:13.95px;font-weight:bold;color:#4a4a4a;white-space:nowrap;line-height:1;transform:scaleX(0.9167);transform-origin:0 0;">Dec</div>
<div style="position:absolute;left:1956.0px;top:1585.2px;font-size:13.95px;font-weight:bold;color:#4a4a4a;white-space:nowrap;line-height:1;transform:scaleX(0.9565);transform-origin:0 0;">Jan</div>
<div style="position:absolute;left:2216.0px;top:1585.2px;font-size:13.95px;font-weight:bold;color:#4a4a4a;white-space:nowrap;line-height:1;transform:scaleX(0.9565);transform-origin:0 0;">Feb</div>
<div style="position:absolute;left:2476.8px;top:1585.2px;font-size:13.95px;font-weight:bold;color:#4a4a4a;white-space:nowrap;line-height:1;transform:scaleX(0.9565);transform-origin:0 0;">Feb</div>
<div style="position:absolute;left:2737.6px;top:1585.2px;font-size:13.95px;font-weight:bold;color:#4a4a4a;white-space:nowrap;line-height:1;transform:scaleX(0.9167);transform-origin:0 0;">Mar</div>
<div style="position:absolute;left:2484.0px;top:1268px;width:12px;height:12px;border-radius:50%;background:#5b8def"></div>
<div style="position:absolute;left:2505.7px;top:1265.0px;font-size:15.55px;font-weight:bold;color:#333;white-space:nowrap;line-height:1;transform:scaleX(0.9298);transform-origin:0 0;">2023-24</div>
<div style="position:absolute;left:2585.7px;top:1268px;width:12px;height:12px;border-radius:50%;background:#7fd4a8"></div>
<div style="position:absolute;left:2607.0px;top:1265.0px;font-size:15.55px;font-weight:bold;color:#333;white-space:nowrap;line-height:1;transform:scaleX(0.9298);transform-origin:0 0;">2022-23</div>
<div style="position:absolute;left:2687.0px;top:1268px;width:12px;height:12px;border-radius:50%;background:#4a5578"></div>
<div style="position:absolute;left:2708.6px;top:1265.0px;font-size:15.55px;font-weight:bold;color:#333;white-space:nowrap;line-height:1;transform:scaleX(0.9298);transform-origin:0 0;">2021-22</div>
<div style="position:absolute;left:825.0px;top:1630.0px;width:1959.7px;height:2.5px;background:#eceef2;border-radius:0px;"></div>
<div style="position:absolute;left:824px;top:1326px;width:3px;height:3px;background:#333;border-radius:50%"></div>
</body></html>
